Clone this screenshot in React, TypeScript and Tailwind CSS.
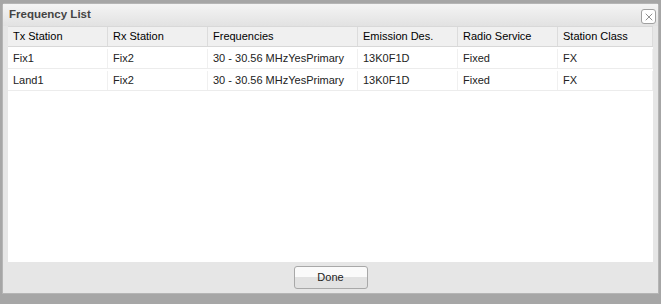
import { X } from "lucide-react";

const columns = [
  { label: "Tx Station", w: "w-[100px]" },
  { label: "Rx Station", w: "w-[100px]" },
  { label: "Frequencies", w: "w-[150px]" },
  { label: "Emission Des.", w: "w-[100px]" },
  { label: "Radio Service", w: "w-[100px]" },
  { label: "Station Class", w: "flex-1" },
];

const rows = [
  ["Fix1", "Fix2", "30 - 30.56 MHzYesPrimary", "13K0F1D", "Fixed", "FX"],
  ["Land1", "Fix2", "30 - 30.56 MHzYesPrimary", "13K0F1D", "Fixed", "FX"],
];

export default function App() {
  return (
    <div className="w-[661px] h-[304px] bg-[#a6a6a6] pt-[3px] pl-[2px] pr-[2px] pb-[10px] font-['Liberation_Sans',Arial,sans-serif] text-[11px] text-[#222]">
      <div className="h-full flex flex-col bg-[#e6e6e6] border border-[#b5b5b5] rounded-t-[3px] px-[5px]">
        {/* title bar */}
        <div className="h-[22px] flex items-center justify-between bg-gradient-to-b from-[#f4f4f4] to-[#e2e2e2] -mx-[5px] pl-[6px] pr-[2px]">
          <span className="font-bold text-[11.5px] text-[#444]">Frequency List</span>
          <button className="w-[15px] h-[15px] flex items-center justify-center border border-[#a0a0a0] rounded-[3px] bg-white mt-[3px]">
            <X size={12} strokeWidth={1.3} className="text-[#555]" />
          </button>
        </div>

        {/* grid */}
        <div className="flex-1 bg-white border-t border-[#d8d8d8]">
          <div className="flex h-[20px] bg-[#f0f0f0] border-b border-[#d8d8d8]">
            {columns.map((c) => (
              <div key={c.label} className={`${c.w} flex items-center px-[5px] border-r border-[#dcdcdc] text-[#000] whitespace-nowrap`}>
                {c.label}
              </div>
            ))}
          </div>
          {rows.map((r, i) => (
            <div key={i} className="flex h-[22px] pt-[2px] border-b border-[#ececec]">
              {r.map((v, j) => (
                <div key={j} className={`${columns[j].w} flex items-center px-[5px] border-r border-[#f0f0f0] whitespace-nowrap`}>
                  {v}
                </div>
              ))}
            </div>
          ))}
        </div>

        {/* footer */}
        <div className="h-[31px] flex items-center justify-center">
          <button className="w-[74px] h-[23px] rounded-[3px] border border-[#a8a8a8] bg-gradient-to-b from-[#fafafa] from-50% to-[#e2e2e2] to-50% text-[11px] text-[#222]">
            Done
          </button>
        </div>
      </div>
    </div>
  );
}
